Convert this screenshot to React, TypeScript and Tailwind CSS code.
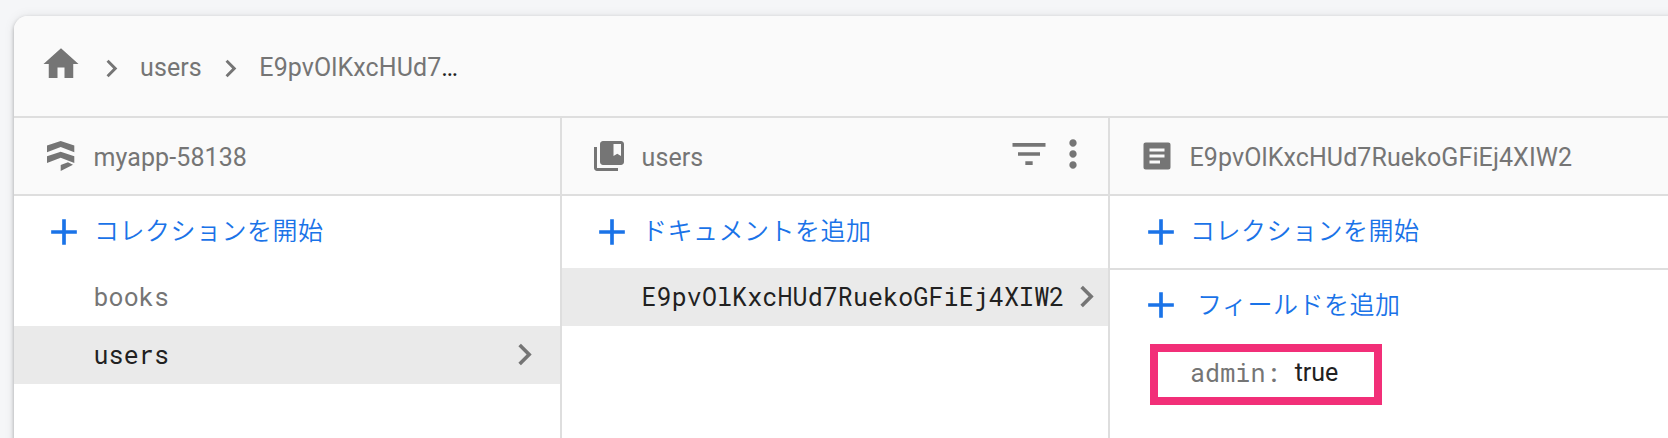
import React from "react";

type IconProps = { size: number; className?: string; d: string };

const Icon = ({ size, className = "", d }: IconProps) => (
  <svg width={size} height={size} viewBox="0 0 24 24" fill="currentColor" className={"shrink-0 " + className}>
    <path d={d} />
  </svg>
);

const HOME = "M10 20v-6h4v6h5v-8h3L12 3 2 12h3v8z";
const CHEVRON = "M10 6L8.59 7.41 13.17 12l-4.58 4.59L10 18l6-6z";
const ADD = "M19 13h-6v6h-2v-6H5v-2h6V5h2v6h6v2z";
const FILTER = "M10 18h4v-2h-4v2zM3 6v2h18V6H3zm3 7h12v-2H6v2z";
const MORE =
  "M12 8c1.1 0 2-.9 2-2s-.9-2-2-2-2 .9-2 2 .9 2 2 2zm0 2c-1.1 0-2 .9-2 2s.9 2 2 2 2-.9 2-2-.9-2-2-2zm0 6c-1.1 0-2 .9-2 2s.9 2 2 2 2-.9 2-2-.9-2-2-2z";
const COLLECTION =
  "M4 6H2v14c0 1.1.9 2 2 2h14v-2H4V6zM20 2H8c-1.100 0-2 .9-2 2v12c0 1.100.9 2 2 2h12c1.100 0 2-.9 2-2V4c0-1.100-.9-2-2-2zM20 12l-2.500-1.500L15 12V4h5v8z";
const DOCUMENT =
  "M19.500 3h-15C3.600 3 3 3.600 3 4.500v15c0 .9.6 1.500 1.500 1.500h15c.9 0 1.500-.6 1.500-1.500v-15c0-.9-.6-1.500-1.500-1.500zM14 17H7v-2h7v2zm3-4H7v-2h10v2zm0-4H7V7h10v2z";

const MONO = "tracking-[0.1px] font-['Roboto_Mono','DejaVu_Sans_Mono',monospace]";

function AddRow({ label, className = "", iconClass = "", labelClass = "ml-2" }: {
  label: string;
  className?: string;
  iconClass?: string;
  labelClass?: string;
}) {
  return (
    <div className={"flex h-[72px] items-center text-[#1a73e8] " + (className || "pl-7")}>
      <Icon size={44} d={ADD} className={iconClass} />
      <span className={"text-[25px] [font-weight:350] tracking-[0.5px] " + labelClass}>{label}</span>
    </div>
  );
}

function PanelHeader({ icon, title, children }: { icon: React.ReactNode; title: string; children?: React.ReactNode }) {
  return (
    <div className="flex h-[78px] items-center border-b-2 border-[#dedede] bg-[#fafafa] pl-[29px] text-[#757575]">
      {icon}
      <span className="ml-[14.5px] pt-1 text-[25px] leading-8 tracking-[0.1px]">{title}</span>
      {children}
    </div>
  );
}

export default function App() {
  return (
    <div className="h-[438px] w-full overflow-hidden bg-[#f5f6f8] pl-[14px] pt-4 font-[Roboto,'Noto_Sans_CJK_JP',sans-serif]">
      <div className="flex h-[440px] w-[1700px] flex-col overflow-hidden rounded-tl-[14px] bg-white shadow-[0_2px_4px_rgba(0,0,0,0.3),0_0_12px_rgba(0,0,0,0.08)]">
        <nav className="flex h-[102px] shrink-0 items-center border-b-2 border-[#dedede] bg-[#fafafa] pl-[26px] text-[25px] tracking-[0.1px] text-[#757575]">
          <Icon size={42} d={HOME} className="mb-1" />
          <Icon size={35} d={CHEVRON} className="ml-[11.5px] mt-1" />
          <span className="ml-[11.5px] mt-1">users</span>
          <Icon size={35} d={CHEVRON} className="ml-[11.5px] mt-1" />
          <span className="ml-[11px] mt-1">
            E9pvOlKxcHUd7<span className="text-[#212121]">…</span>
          </span>
        </nav>
        <div className="grid flex-1 grid-cols-[548px_548px_1fr]">
          <section className="border-r-2 border-[#dedede]">
            <PanelHeader
              title="myapp-58138"
              icon={
                <svg width="36" height="36" viewBox="0 0 36 36" fill="currentColor" className="shrink-0">
                  <path d="M4 7.500L17.700 3 31.300 7.500v6.800L17.700 9 4 14.300zM4 18.300l13.700-4.600 13.600 4.600V25l-13.600-5.300L4 25zM17.700 27l7.300-2.800 5 2.600-12.300 6.200z" />
                </svg>
              }
            />
            <AddRow label="コレクションを開始" />
            <div className={"flex h-[58px] items-center pl-[79.5px] text-[25px] text-[#757575] " + MONO}>books</div>
            <div className={"flex h-[58px] items-center bg-[#eaeaea] pl-[79.5px] text-[25px] text-[#212121] " + MONO}>
              users
              <Icon size={43} d={CHEVRON} className="mb-px ml-auto mr-[14px] text-[#757575]" />
            </div>
          </section>
          <section className="border-r-2 border-[#dedede]">
            <PanelHeader title="users" icon={<Icon size={36} d={COLLECTION} />}>
              <Icon size={44} d={FILTER} className="mb-1 ml-auto" />
              <Icon size={44} d={MORE} className="mb-1 mr-[13.5px]" />
            </PanelHeader>
            <AddRow label="ドキュメントを追加" />
            <div className={"flex h-[58px] items-center bg-[#eaeaea] pl-[79.5px] text-[25px] text-[#212121] " + MONO}>
              E9pvOlKxcHUd7RuekoGFiEj4XIW2
              <Icon size={43} d={CHEVRON} className="mb-px ml-auto text-[#757575]" />
            </div>
          </section>
          <section>
            <PanelHeader title="E9pvOlKxcHUd7RuekoGFiEj4XIW2" icon={<Icon size={36} d={DOCUMENT} className="mb-px" />} />
            <AddRow label="コレクションを開始" className="pl-[29px]" labelClass="ml-[7px]" />
            <div className="border-t-2 border-[#dedede]">
              <AddRow label="フィールドを追加" className="pl-[29px]" iconClass="mb-[3px]" labelClass="ml-[14px]" />
              <div className="ml-[39.5px] mt-[1.5px] flex h-[61px] w-[232px] items-center border-8 border-[#f22f78] pl-[32.5px] text-[25px]">
                <span className={"mb-[2px] text-[#757575] " + MONO}>admin:</span>
                <span className="mb-[3px] ml-[14px] text-[#212121]">true</span>
              </div>
            </div>
          </section>
        </div>
      </div>
    </div>
  );
}
